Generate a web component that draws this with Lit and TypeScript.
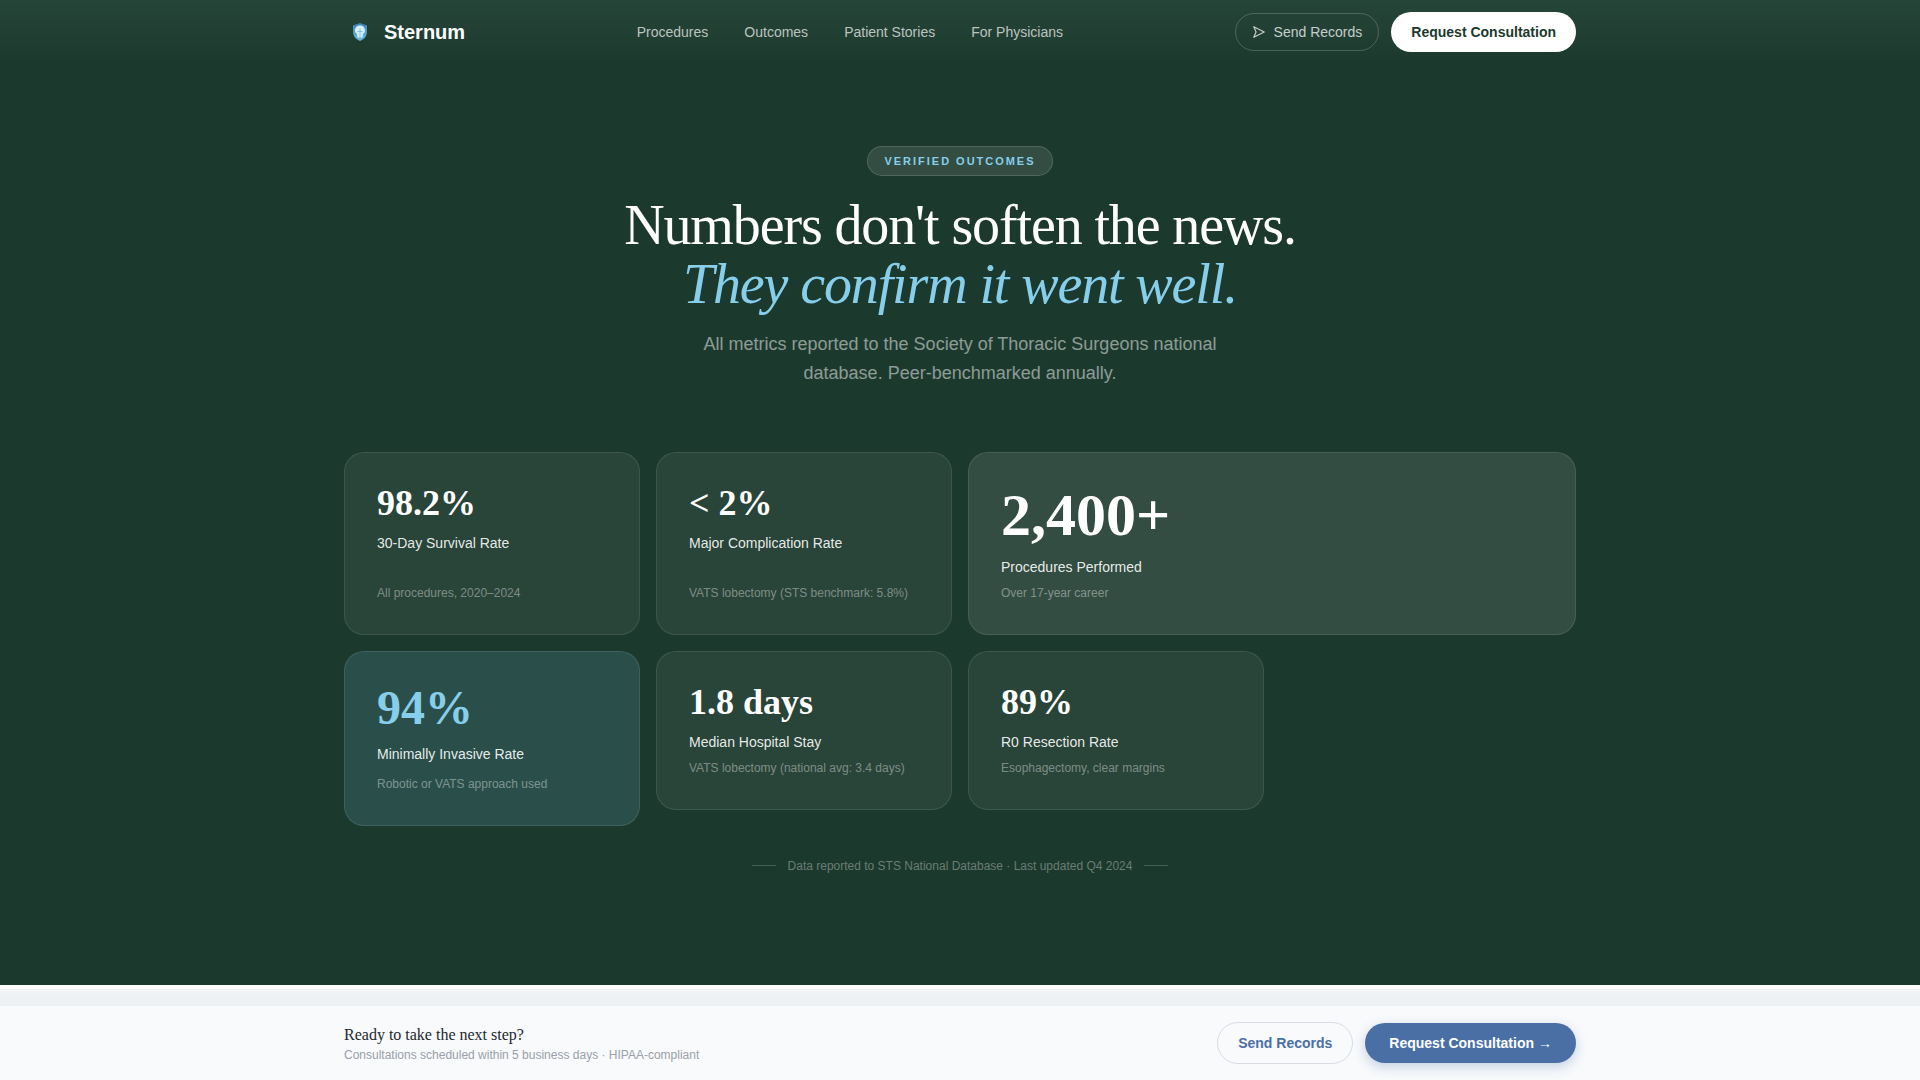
import { LitElement, html, css } from "lit";
import { customElement } from "lit/decorators.js";

const stats = [
  { v: "98.2%", l: "30-Day Survival Rate", n: "All procedures, 2020–2024", k: "top" },
  { v: "< 2%", l: "Major Complication Rate", n: "VATS lobectomy (STS benchmark: 5.8%)", k: "top" },
  { v: "2,400+", l: "Procedures Performed", n: "Over 17-year career", k: "wide" },
  { v: "94%", l: "Minimally Invasive Rate", n: "Robotic or VATS approach used", k: "tall" },
  { v: "1.8 days", l: "Median Hospital Stay", n: "VATS lobectomy (national avg: 3.4 days)", k: "" },
  { v: "89%", l: "R0 Resection Rate", n: "Esophagectomy, clear margins", k: "" },
];

@customElement("app-root")
export class AppRoot extends LitElement {
  static styles = css`
    :host { display: block; height: 1080px; overflow: hidden; background: #f8fafc; font-family: "Liberation Sans", Arial, sans-serif; }
    .dark { height: 985px; background: #1c392d; display: flex; flex-direction: column; }
    .head { height: 64px; flex: none; background: linear-gradient(180deg, #264539 0%, #1c392d 100%); }
    .wrap { width: 1232px; margin: 0 auto; }
    .nav { height: 64px; display: flex; justify-content: space-between; align-items: center; }
    .brand { display: flex; align-items: center; gap: 8px; font-size: 20px; font-weight: 700; color: #fff; }
    .logo { width: 32px; height: 32px; display: flex; align-items: center; justify-content: center; }
    .logo svg { display: block; }
    .links { display: flex; gap: 36px; font-size: 14px; color: rgba(255,255,255,.7); }
    .acts { display: flex; align-items: center; gap: 12px; }
    .ghost { height: 38px; box-sizing: border-box; padding: 0 16px; border: 1px solid rgba(255,255,255,.2); border-radius: 999px; display: flex; align-items: center; gap: 8px; color: rgba(255,255,255,.75); font-size: 14px; }
    .solid { height: 40px; padding: 0 20px; background: #fff; border-radius: 999px; display: flex; align-items: center; color: #1c392d; font-size: 14px; font-weight: 700; }
    .hero { display: flex; flex-direction: column; align-items: center; padding-top: 82px; }
    .badge { height: 30px; box-sizing: border-box; padding: 0 16px; display: flex; align-items: center; border-radius: 999px; background: rgba(255,255,255,.1); border: 1px solid rgba(255,255,255,.15); color: #87ceeb; font-size: 11px; font-weight: 700; letter-spacing: .18em; }
    h1 { margin: 20px 0 0; font-family: "Liberation Serif", "Times New Roman", serif; font-weight: 400; font-size: 56px; line-height: 1.05; letter-spacing: -.02em; color: #fff; text-align: center; }
    h1 em { color: #87ceeb; display: block; }
    .sub { margin: 16px 0 0; width: 560px; text-align: center; font-size: 18px; line-height: 1.65; color: rgba(255,255,255,.5); }
    .grid { margin-top: 63px; display: grid; grid-template-columns: repeat(4, 1fr); gap: 16px; align-items: start; }
    .card { box-sizing: border-box; display: flex; flex-direction: column; padding: 32px; border-radius: 20px; background: rgba(255,255,255,.06); border: 1px solid rgba(255,255,255,.1); }
    .card.top { align-self: stretch; padding-bottom: 33px; }
    .card.top .n { margin-top: auto; }
    .card.wide { grid-column: span 2; align-self: stretch; padding-bottom: 33px; background: rgba(255,255,255,.1); }
    .card.tall { background: #2a4f4a; }
    .v { font-family: "Liberation Serif", "Times New Roman", serif; font-weight: 700; font-size: 36px; line-height: 1; color: #fff; }
    .wide .v { font-size: 60px; }
    .tall .v { font-size: 48px; color: #87ceeb; }
    .l { margin-top: 13px; font-size: 14px; line-height: 1.4; color: rgba(255,255,255,.9); }
    .n { margin-top: 7px; font-size: 12px; line-height: 1.4; color: rgba(255,255,255,.4); }
    .tall .n { margin-top: 11px; }
    .foot { margin-top: 33px; display: flex; justify-content: center; align-items: center; gap: 12px; font-size: 12px; color: rgba(255,255,255,.35); }
    .foot i { width: 24px; height: 1px; background: rgba(255,255,255,.2); }
    .sep { height: 21px; background: linear-gradient(180deg, #fff 0 4px, #e8eaee 4px 5px, #fff 5px 6px, #f0f3f5 6px, #edf0f3 100%); }
    .cta { height: 74px; background: #f8fafc; }
    .cta .wrap { height: 100%; display: flex; align-items: center; justify-content: space-between; }
    .txt { padding-top: 2px; }
    .q { font-family: "Liberation Serif", "Times New Roman", serif; font-size: 16px; line-height: 21px; color: #22282e; }
    .q2 { margin-top: 1px; font-size: 12px; line-height: 18px; color: #9aa0a8; }
    .btns { display: flex; align-items: center; gap: 12px; }
    .b1 { height: 42px; box-sizing: border-box; padding: 0 20px; border: 1px solid #d8dce4; border-radius: 999px; display: flex; align-items: center; font-size: 14px; font-weight: 700; color: #4a6fa5; }
    .b2 { height: 40px; padding: 0 24px; border-radius: 999px; display: flex; align-items: center; gap: 4px; font-size: 14px; font-weight: 700; color: #fff; background: #4a6fa5; box-shadow: 0 4px 12px rgba(74,111,165,.3); }
  `;

  render() {
    return html`
      <div class="dark">
        <div class="head"><div class="wrap nav">
          <div class="brand">
            <div class="logo">
              <svg width="16" height="20" viewBox="0 0 16 20">
                <defs><linearGradient id="sh" x1="0" y1="0" x2="0" y2="1"><stop offset="0" stop-color="#3f86b8"/><stop offset="1" stop-color="#6fb8e0"/></linearGradient></defs>
                <path d="M8 1 L15 3.5 V10 C15 14.5 11.5 17.5 8 19 C4.5 17.5 1 14.5 1 10 V3.5 Z" fill="url(#sh)" />
                <path d="M8 3.5 C5 3.5 3 5.8 3 8.5 C3 10.3 4.2 11.3 5.2 12 V15.5 H10.8 V12 C11.8 11.3 13 10.3 13 8.5 C13 5.8 11 3.5 8 3.5 Z" fill="#d6f1fb" />
                <path d="M8 6.5 V15 M5.5 9.5 H10.5" stroke="#7ec0e6" stroke-width="1" fill="none" />
              </svg>
            </div>
            <span>Sternum</span>
          </div>
          <div class="links"><span>Procedures</span><span>Outcomes</span><span>Patient Stories</span><span>For Physicians</span></div>
          <div class="acts">
            <div class="ghost">
              <svg width="14" height="14" viewBox="0 0 24 24" fill="none" stroke="currentColor" stroke-width="2" stroke-linejoin="round"><path d="M3 3 L21 12 L3 21 L7 12 Z" /></svg>
              <span>Send Records</span>
            </div>
            <div class="solid">Request Consultation</div>
          </div>
        </div></div>
        <div class="wrap">
          <div class="hero">
            <div class="badge">VERIFIED OUTCOMES</div>
            <h1>Numbers don't soften the news.<em>They confirm it went well.</em></h1>
            <p class="sub">All metrics reported to the Society of Thoracic Surgeons national database. Peer-benchmarked annually.</p>
          </div>
          <div class="grid">
            ${stats.map((s) => html`<div class="card ${s.k}"><div class="v">${s.v}</div><div class="l">${s.l}</div><div class="n">${s.n}</div></div>`)}
          </div>
          <div class="foot"><i></i><span>Data reported to STS National Database · Last updated Q4 2024</span><i></i></div>
        </div>
      </div>
      <div class="sep"></div>
      <div class="cta"><div class="wrap">
        <div class="txt"><div class="q">Ready to take the next step?</div><div class="q2">Consultations scheduled within 5 business days · HIPAA-compliant</div></div>
        <div class="btns"><div class="b1">Send Records</div><div class="b2">Request Consultation <span>→</span></div></div>
      </div></div>
    `;
  }
}
